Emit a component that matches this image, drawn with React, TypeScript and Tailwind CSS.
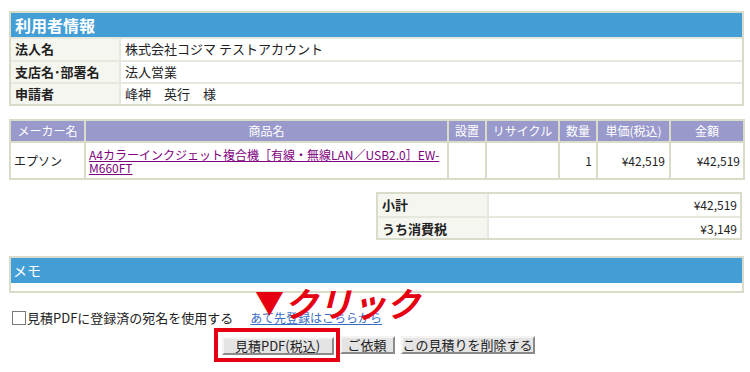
const font = { fontFamily: '"Noto Sans CJK JP", "Noto Sans", sans-serif' };

const userRows = [
  { label: "法人名", value: "株式会社コジマ テストアカウント", h: "h-[23px]" },
  { label: "支店名･部署名", value: "法人営業", h: "h-[22px]" },
  { label: "申請者", value: "峰神　英行　様", h: "h-[22px]" },
];

const btn =
  "h-[18px] bg-[#e4e4e4] border-2 border-t-[#f4f4f4] border-l-[#f4f4f4] border-r-[#8a8a8a] border-b-[#8a8a8a] leading-[14px]";

export default function App() {
  return (
    <div className="w-[750px] h-[372px] bg-white text-[#222] overflow-hidden pt-[11px] pl-[9px]" style={font}>
      {/* 利用者情報 */}
      <div className="w-[735px] border-2 border-[#d9dcc9]">
        <div className="h-[24px] bg-[#449ed6] text-white font-bold text-[16px] leading-[24px] pl-[4px]">利用者情報</div>
        {userRows.map((r) => (
          <div key={r.label} className={`flex ${r.h} border-t-2 border-[#e6e8dd] text-[13px] leading-[20px]`}>
            <div className="w-[108px] bg-[#f6f6f1] pl-[4px] font-bold">{r.label}</div>
            <div className="flex-1 border-l-2 border-[#e6e8dd] pl-[4px]">{r.value}</div>
          </div>
        ))}
      </div>

      {/* 商品 */}
      <table className="mt-[13px] w-[734px] table-fixed border-collapse text-[12px]">
        <colgroup>
          <col className="w-[75px]" />
          <col className="w-[363px]" />
          <col className="w-[38px]" />
          <col className="w-[73px]" />
          <col className="w-[38px]" />
          <col className="w-[73px]" />
          <col className="w-[74px]" />
        </colgroup>
        <thead>
          <tr className="h-[22px] bg-[#9999cc] text-white">
            {["メーカー名", "商品名", "設置", "リサイクル", "数量", "単価(税込)", "金額"].map((h) => (
              <th key={h} className="border-2 border-[#d9dcc9] font-normal text-center p-0 whitespace-nowrap">{h}</th>
            ))}
          </tr>
        </thead>
        <tbody>
          <tr className="h-[37px]">
            <td className="border-2 border-[#d9dcc9] pl-[3px]">エプソン</td>
            <td className="border-2 border-[#d9dcc9] px-[3px] leading-[13px]">
              <a href="#" className="text-[#800080] underline">A4カラーインクジェット複合機［有線・無線LAN／USB2.0］EW-M660FT</a>
            </td>
            <td className="border-2 border-[#d9dcc9]"></td>
            <td className="border-2 border-[#d9dcc9]"></td>
            <td className="border-2 border-[#d9dcc9] text-right pr-[4px]">1</td>
            <td className="border-2 border-[#d9dcc9] text-right pr-[4px]">¥42,519</td>
            <td className="border-2 border-[#d9dcc9] text-right pr-[3px]">¥42,519</td>
          </tr>
        </tbody>
      </table>

      {/* 小計 */}
      <div className="ml-[367px] mt-[12px] w-[366px] border-2 border-[#d9dcc9] text-[12px]">
        {[
          { label: "小計", value: "¥42,519" },
          { label: "うち消費税", value: "¥3,149" },
        ].map((r, i) => (
          <div key={r.label} className={`flex h-[22px] leading-[21px] ${i > 0 ? "border-t-2 border-[#e6e8dd]" : ""}`}>
            <div className="w-[109px] bg-[#f6f6f1] pl-[4px] font-bold text-[13px]">{r.label}</div>
            <div className="flex-1 border-l-2 border-[#e6e8dd] text-right pr-[3px]">{r.value}</div>
          </div>
        ))}
      </div>

      {/* メモ */}
      <div className="mt-[16px] w-[735px] border-2 border-[#d9dcc9]">
        <div className="h-[25px] bg-[#449ed6] text-white text-[14px] leading-[25px] pl-[2px]">メモ</div>
        <div className="h-[8px] bg-white"></div>
      </div>

      {/* 宛名 */}
      <div className="relative mt-[17px] flex items-center h-[16px] text-[13px]">
        <span className="ml-[3px] w-[14px] h-[14px] border border-[#7a7a7a] bg-white"></span>
        <span className="ml-[1px]">見積PDFに登録済の宛名を使用する</span>
        <a href="#" className="ml-[17px] text-[12px] text-[#3a6dc4] underline">あて先登録はこちらから</a>
        <div className="absolute left-[246px] top-[-24px] flex items-end text-[#e60012] font-bold leading-none">
          <span className="text-[29px] mb-[4px]">▼</span>
          <span className="text-[34px] italic">クリック</span>
        </div>
      </div>

      {/* ボタン */}
      <div className="mt-[10px] flex justify-center gap-[6px] w-[735px] text-[13px] pl-[3px]">
        <div className="relative">
          <button className={`${btn} w-[112px]`}>見積PDF(税込)</button>
          <div className="absolute left-[-8px] top-[-8px] w-[126px] h-[34px] border-[4px] border-[#e60012]"></div>
        </div>
        <button className={`${btn} w-[55px]`}>ご依頼</button>
        <button className={`${btn} w-[134px]`}>この見積りを削除する</button>
      </div>
    </div>
  );
}
